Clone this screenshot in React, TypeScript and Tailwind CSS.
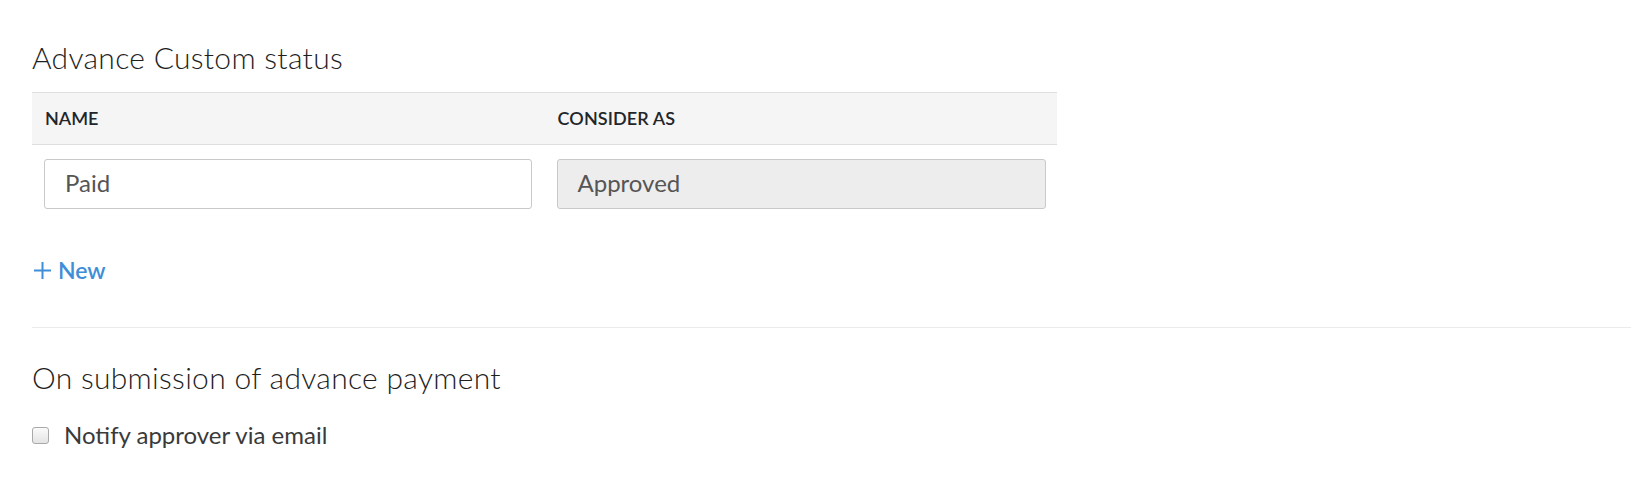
import React from "react";

export default function App() {
  return (
    <div
      className="w-full h-[478px] bg-white pl-[32px] pr-[17px] pt-[39px] text-[#333]"
      style={{ fontFamily: "Lato, 'Open Sans', sans-serif" }}
    >
      <h2 className="text-[30px] leading-[36px] font-light text-[#1f1f1f] tracking-[0.3px]">Advance Custom status</h2>

      <div className="mt-[17px] w-[1025px]">
        <div className="grid grid-cols-2 h-[53px] items-center bg-[#f5f5f5] border-y border-[#dedede]">
          <div className="px-[13px] text-[18px] font-semibold text-[#22262b]">NAME</div>
          <div className="px-[13px] text-[18px] font-semibold text-[#22262b] tracking-[0.1px]">CONSIDER AS</div>
        </div>
        <div className="grid grid-cols-2 pt-[14px]">
          <div className="pl-[12px] pr-[13px]">
            <div className="h-[50px] border border-[#c9c9c9] rounded-[3px] bg-white flex items-center pl-[20px] pb-[3px] text-[24px] text-[#555]">
              Paid
            </div>
          </div>
          <div className="pl-[12px] pr-[11px]">
            <div className="h-[50px] border border-[#c9c9c9] rounded-[3px] bg-[#ededed] flex items-center pl-[20px] pb-[3px] text-[24px] text-[#555]">
              Approved
            </div>
          </div>
        </div>
      </div>

      <div className="mt-[48px] flex items-center h-[26px] text-[#3f8ed8] text-[23px] font-semibold">
        <svg width="19" height="19" viewBox="0 0 19 19" className="mr-[6px] ml-[1px]">
          <path d="M9.5 1v17M1 9.5h17" stroke="#3f8ed8" strokeWidth="2" fill="none" />
        </svg>
        <span>New</span>
      </div>

      <div className="mt-[44px] border-t border-[#ebebeb]" />

      <h2 className="mt-[31px] text-[30px] leading-[36px] font-light text-[#1f1f1f] tracking-[0.3px]">On submission of advance payment</h2>

      <label className="mt-[27px] flex items-center gap-[15px] text-[24px] font-normal text-[#3a3a3a] leading-[26px]">
        <span className="w-[17px] h-[17px] rounded-[3px] border border-[#a9a9a9] bg-gradient-to-b from-[#fafafa] to-[#e4e4e4] shrink-0" />
        <span>Notify approver via email</span>
      </label>
    </div>
  );
}
